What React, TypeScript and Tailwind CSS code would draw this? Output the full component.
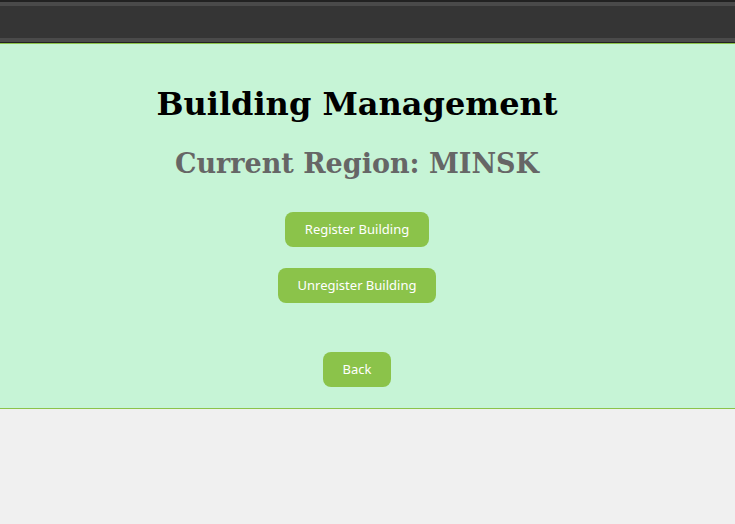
export default function App() {
  return (
    <div className="min-h-[524px] bg-[#f0f0f0]">
      {/* top bar */}
      <div className="h-[43px] bg-[#353535] border-t-2 border-t-[#222] border-b border-b-[#222]">
        <div className="h-[4px] bg-[#4a4a4a]" />
        <div className="h-[32px]" />
        <div className="h-[4px] bg-[#4a4a4a]" />
      </div>
      <section className="h-[366px] bg-[#c6f4d6] border-t border-b border-[#8bc34a] flex flex-col items-center pr-[21px]">
        <h1 className="mt-[40px] text-[32px] leading-[40px] font-bold text-black font-['DejaVu_Serif',serif]">
          Building Management
        </h1>
        <h2 className="mt-[22px] text-[27px] leading-[36px] font-bold text-[#666] font-['DejaVu_Serif',serif]">
          Current Region: MINSK
        </h2>
        <div className="mt-[30px] flex flex-col items-center gap-[21px] font-['Noto_Sans',sans-serif] text-[13px] text-white">
          <button className="h-[35px] px-[20px] rounded-[8px] bg-[#8bc34a]">Register Building</button>
          <button className="h-[35px] px-[20px] rounded-[8px] bg-[#8bc34a]">Unregister Building</button>
          <button className="mt-[28px] h-[35px] px-[20px] rounded-[8px] bg-[#8bc34a]">Back</button>
        </div>
      </section>
    </div>
  );
}
